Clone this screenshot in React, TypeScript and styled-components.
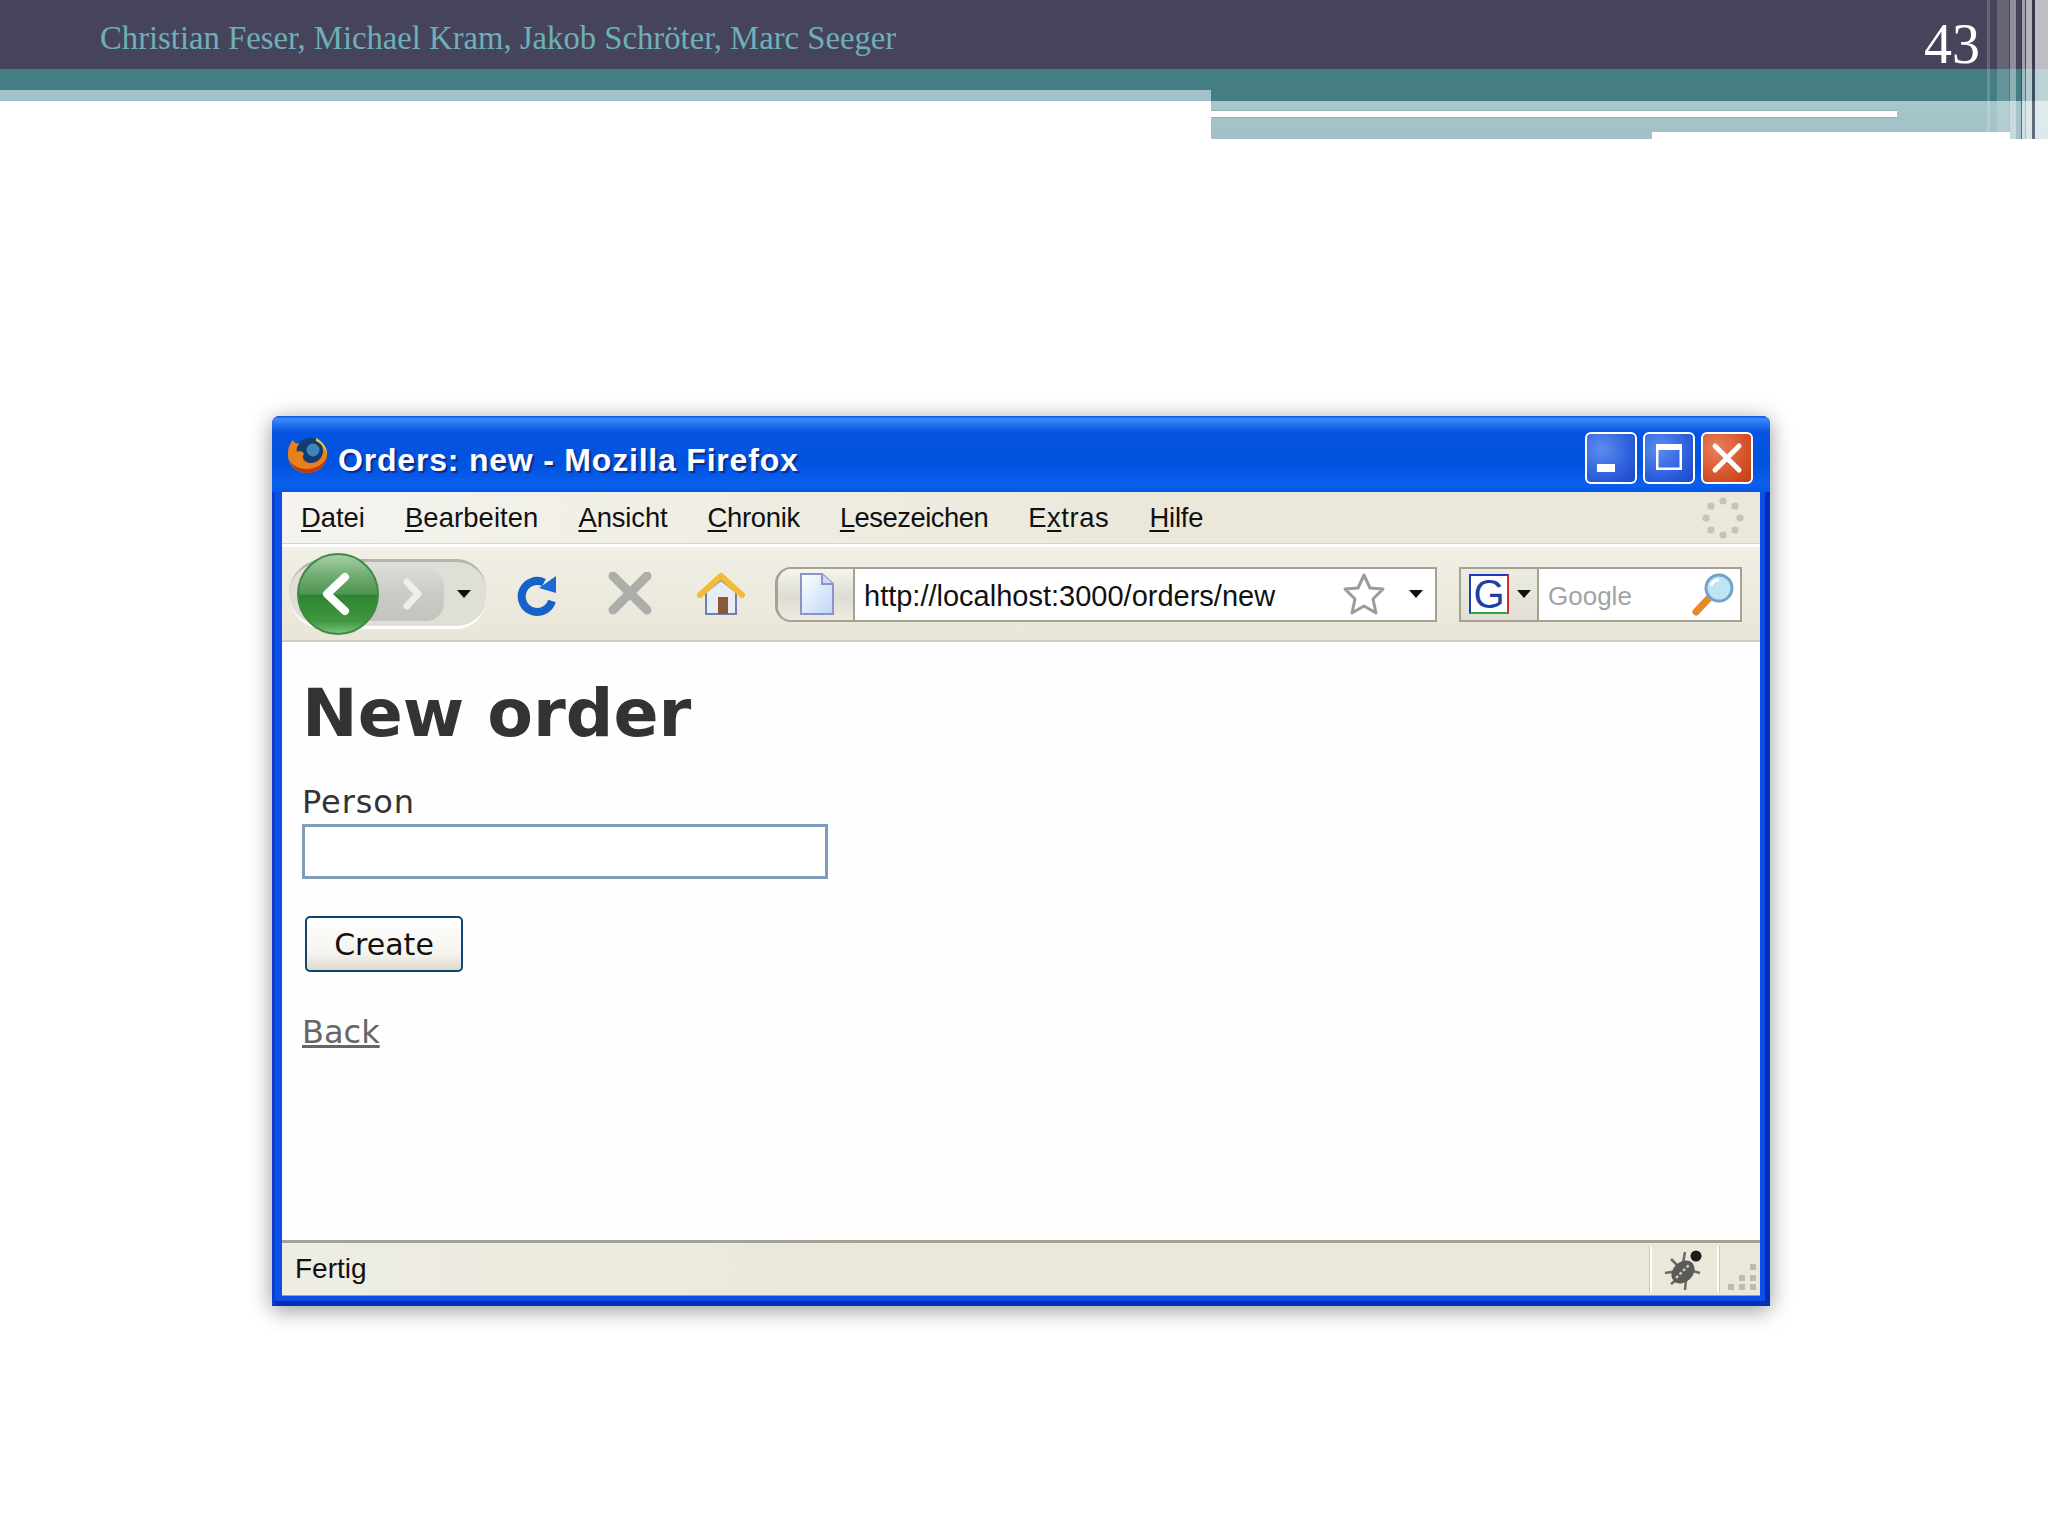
import { createGlobalStyle, styled } from "styled-components";

const GlobalStyle = createGlobalStyle`
    html, body {
        margin: 0;
        padding: 0;
        background: #ffffff;
    }
`

const Page = styled.div`
    position: relative;
    width: 2048px;
    height: 1536px;
    overflow: hidden;
    background: #ffffff;
`

const Header = styled.header`
    position: relative;
    height: 139px;
`

const TopBar = styled.div`
    height: 69px;
    display: flex;
    align-items: flex-start;
    justify-content: space-between;
    background: #45445a;
    padding: 0 68px 0 100px;
`

const Authors = styled.span`
    font-family: "Liberation Serif", serif;
    font-size: 32.7px;
    line-height: 76px;
    color: #6eafba;
`

const SlideNumber = styled.span`
    font-family: "Liberation Serif", serif;
    font-size: 56px;
    line-height: 88px;
    color: #ffffff;
`

const BandRow = styled.div`
    display: flex;
`

const LeftBand = styled.div`
    width: 1211px;
    height: 32px;
    background: linear-gradient(#457d85 21px, #a3c1ca 21px);
`

const RightBand = styled.div`
    flex: 1;
    display: flex;
    flex-direction: column;
`

const TealBar = styled.div`
    height: 32px;
    background: #457d85;
`

const PaleBlock = styled.div`
    height: 38px;
    padding-top: 10px;
    box-sizing: border-box;
    display: flex;
    flex-direction: column;
    background: linear-gradient(#a6c7c8, #a3bfc8);
`

const WhiteStrip = styled.div`
    width: 686px;
    height: 6px;
    background: #ffffff;
    box-shadow: 0 -1px 0 #93b2b4, 0 1px 0 #93b2b4;
`

const WhiteNotch = styled.div`
    width: 358px;
    height: 7px;
    margin: 15px 0 0 441px;
    background: #ffffff;
`

const StripeOverlay = styled.div`
    position: absolute;
    top: 0;
    right: 0;
    bottom: 0;
    width: 61px;
    display: flex;
    pointer-events: none;
`

const Stripe = styled.div<{ $w: number; $a?: number; $dark?: boolean }>`
    flex: 0 0 ${p => p.$w}px;
    background: ${p => p.$dark ? "rgba(50, 50, 70, .6)" : `rgba(255, 255, 255, ${p.$a ?? 0})`};
`

const Slide = styled.main`
    padding: 277px 0 0 272px;
`

const Window = styled.div`
    width: 1498px;
    height: 890px;
    box-sizing: border-box;
    display: flex;
    flex-direction: column;
    border-radius: 8px 8px 0 0;
    background: #0f4ee6;
    box-shadow: 0 4px 22px rgba(0, 0, 0, .42), inset 3px 0 0 #0a3dcc, inset -5px -5px 0 #0030b8;
    padding: 0 10px 10px 10px;
`

const TitleBar = styled.div`
    flex: 0 0 76px;
    margin: 0 -10px;
    padding: 0 17px 0 15px;
    display: flex;
    align-items: center;
    border-radius: 8px 8px 0 0;
    background: linear-gradient(#0a56dc 0, #3a8cf8 3px, #2a78f0 7px, #0653e2 16px, #0153df 50px, #0a60ee 68px, #0557e6 76px);
`

const AppIcon = styled.svg`
    flex: 0 0 auto;
    width: 42px;
    height: 38px;
    margin-top: 1px;
`

const TitleText = styled.span`
    margin: 12px 0 0 9px;
    font-family: "Liberation Sans", sans-serif;
    font-weight: 700;
    font-size: 32px;
    letter-spacing: 0.8px;
    color: #ffffff;
    text-shadow: 2px 2px 1px #0a2a90;
`

const WinButtons = styled.div`
    margin: 8px 0 0 auto;
    display: flex;
    gap: 6px;
`

const WinButton = styled.div<{ $close?: boolean }>`
    width: 52px;
    height: 52px;
    box-sizing: border-box;
    display: flex;
    align-items: center;
    justify-content: center;
    border: 2px solid #ffffff;
    border-radius: 6px;
    background: ${p => p.$close
        ? "radial-gradient(circle at 30% 30%, #e8805c, #d5532c 60%, #c23c10)"
        : "radial-gradient(circle at 30% 30%, #5c8cf0, #2e60dc 60%, #1a45c8)"};
`

const MenuBar = styled.nav`
    flex: 0 0 52px;
    display: flex;
    align-items: center;
    gap: 40px;
    padding: 0 16px 0 19px;
    box-sizing: border-box;
    border-bottom: 1px solid #d8d5c5;
    background: linear-gradient(90deg, #f4f3ee, #ebe8da 60%);
`

const MenuItem = styled.span<{ $ls: number }>`
    font-family: "Liberation Sans", sans-serif;
    font-size: 27.4px;
    letter-spacing: ${p => p.$ls}px;
    color: #111111;
    u {
        text-underline-offset: 3px;
    }
`

const Throbber = styled.svg`
    margin-left: auto;
    width: 42px;
    height: 42px;
`

const Toolbar = styled.div`
    flex: 0 0 98px;
    display: flex;
    align-items: center;
    padding: 1px 0 0 7px;
    box-sizing: border-box;
    border-top: 3px solid #ffffff;
    border-bottom: 2px solid #d0cdbd;
    background: linear-gradient(#f1efe6, #e9e6d8);
`

const NavPill = styled.div`
    flex: 0 0 197px;
    height: 70px;
    box-sizing: border-box;
    display: flex;
    align-items: center;
    border-radius: 35px 30px 30px 35px;
    border-top: 3px solid #b4b4ae;
    border-bottom: 3px solid #ffffff;
    background: #dfdfd8;
`

const BackButton = styled.div`
    position: relative;
    z-index: 1;
    flex: 0 0 82px;
    height: 82px;
    margin-left: 8px;
    box-sizing: border-box;
    display: flex;
    align-items: center;
    justify-content: center;
    border-radius: 50%;
    border: 2px solid #3f8a45;
    background: linear-gradient(#a8cfa6 0, #6aa86c 30%, #4f9552 50%, #2f8330 52%, #3f983f 85%, #7cc07a 100%);
`

const ForwardButton = styled.div`
    flex: 0 0 90px;
    height: 54px;
    margin-left: -25px;
    padding-left: 25px;
    box-sizing: border-box;
    display: flex;
    align-items: center;
    justify-content: center;
    border-radius: 0 18px 18px 0;
    background: linear-gradient(#dcdcd8, #cbcbc6 50%, #c4c4bf);
`

const DropArrow = styled.span<{ $mx?: number }>`
    flex: 0 0 auto;
    width: 0;
    height: 0;
    margin: 0 ${p => p.$mx ?? 0}px;
    border-left: 7px solid transparent;
    border-right: 7px solid transparent;
    border-top: 8px solid #111111;
`

const ToolIcon = styled.svg<{ $ml: number; $w: number }>`
    flex: 0 0 auto;
    width: ${p => p.$w}px;
    height: 44px;
    margin-left: ${p => p.$ml}px;
`

const UrlBar = styled.div`
    flex: 0 0 662px;
    height: 55px;
    margin-left: 29px;
    box-sizing: border-box;
    display: flex;
    align-items: stretch;
    border: 2px solid #a5a294;
    border-left: 3px solid #a5a294;
    border-radius: 16px 0 0 16px;
`

const Identity = styled.div`
    flex: 0 0 77px;
    box-sizing: border-box;
    display: flex;
    align-items: center;
    padding-left: 21px;
    border-right: 2px solid #a5a294;
    border-radius: 14px 0 0 14px;
    background: linear-gradient(#f6f5ef, #dddcd2 55%, #eeece2);
`

const UrlField = styled.div`
    flex: 1;
    display: flex;
    align-items: center;
    padding: 0 12px 0 9px;
    background: #ffffff;
`

const UrlText = styled.span`
    margin-top: 5px;
    font-family: "Liberation Sans", sans-serif;
    font-size: 29px;
    color: #111111;
`

const Star = styled.svg`
    width: 44px;
    height: 44px;
    margin-left: auto;
    margin-right: 23px;
`

const SearchBar = styled.div`
    flex: 0 0 283px;
    height: 55px;
    margin-left: 22px;
    box-sizing: border-box;
    display: flex;
    align-items: stretch;
    border: 2px solid #a5a294;
`

const Engine = styled.div`
    flex: 0 0 78px;
    box-sizing: border-box;
    display: flex;
    align-items: center;
    gap: 8px;
    padding-left: 8px;
    border-right: 2px solid #a5a294;
    background: linear-gradient(#ecebe2, #e2e0d6);
`

const EngineLogo = styled.span`
    flex: 0 0 auto;
    width: 40px;
    height: 40px;
    box-sizing: border-box;
    display: flex;
    align-items: center;
    justify-content: center;
    border-style: solid;
    border-width: 2px;
    border-color: #1c3cb8 #d0302c #2eaa3c #1c3cb8;
    background: #ffffff;
    font-family: "Liberation Sans", sans-serif;
    font-size: 40px;
    line-height: 36px;
    color: #1c3fa8;
`

const SearchField = styled.div`
    flex: 1;
    display: flex;
    align-items: center;
    justify-content: space-between;
    padding: 0 4px 0 9px;
    background: #ffffff;
`

const Placeholder = styled.span`
    margin-top: 5px;
    font-family: "Liberation Sans", sans-serif;
    font-size: 26px;
    color: #a3a3a3;
`

const Content = styled.section`
    flex: 1;
    min-height: 0;
    padding: 33px 0 0 20px;
    background: #fefefe;
    font-family: "DejaVu Sans", sans-serif;
    color: #333333;
`

const Heading = styled.h1`
    margin: 0;
    font-size: 66.5px;
    font-weight: 700;
    line-height: 76px;
`

const FieldLabel = styled.label`
    display: block;
    margin-top: 32px;
    font-size: 32px;
    letter-spacing: 0.9px;
    line-height: 38px;
`

const TextBox = styled.div`
    width: 526px;
    height: 55px;
    margin-top: 3px;
    box-sizing: border-box;
    border: 3px solid #7f9db9;
    background: #ffffff;
`

const SubmitButton = styled.button`
    display: block;
    width: 158px;
    height: 56px;
    margin: 37px 0 0 3px;
    padding: 0;
    box-sizing: border-box;
    border: 2px solid #0e4478;
    border-radius: 5px;
    background: linear-gradient(#ffffff, #f4f3ee 70%, #dedbcc);
    font-family: "DejaVu Sans", sans-serif;
    font-size: 30px;
    color: #111111;
`

const BackLink = styled.a`
    display: inline-block;
    margin-top: 41px;
    font-size: 32px;
    line-height: 38px;
    color: #666666;
    text-decoration: underline;
`

const StatusBar = styled.footer`
    flex: 0 0 56px;
    box-sizing: border-box;
    display: flex;
    align-items: center;
    border-top: 3px solid #a3a294;
    border-bottom: 1px solid #6ea4f4;
    background: linear-gradient(90deg, #eeede4, #ebe8da 40%);
    padding-left: 13px;
`

const StatusText = styled.span`
    font-family: "Liberation Sans", sans-serif;
    font-size: 28px;
    color: #111111;
`

const StatusCell = styled.div`
    margin-left: auto;
    flex: 0 0 65px;
    height: 46px;
    display: flex;
    align-items: center;
    justify-content: center;
    border-left: 2px solid #ffffff;
    border-right: 2px solid #ffffff;
    box-shadow: -1px 0 0 #c8c6b6, 1px 0 0 #c8c6b6;
`

const Grip = styled.svg`
    flex: 0 0 41px;
    width: 41px;
    height: 46px;
`

const menuItems: [string, string, string, number][] = [
    ["", "D", "atei", 0],
    ["", "B", "earbeiten", 0.1],
    ["", "A", "nsicht", -0.1],
    ["", "C", "hronik", -0.3],
    ["", "L", "esezeichen", -0.5],
    ["E", "x", "tras", 0.6],
    ["", "H", "ilfe", -0.2],
]

const stripes = [
    {w: 3, a: .18},
    {w: 6.5},
    {w: 12, a: .18},
    {w: 1.5},
    {w: 6, a: .4},
    {w: 5},
    {w: 1, dark: true},
    {w: 3, a: .5},
    {w: 1},
    {w: 6, a: .6},
    {w: 3, dark: true},
    {w: 13, a: .65},
]

const throbberDots = [0, 45, 90, 135, 180, 225, 270, 315]

export default function App() {
    return (
        <Page>
            <GlobalStyle/>
            <Header>
                <TopBar>
                    <Authors>Christian Feser, Michael Kram, Jakob Schröter, Marc Seeger</Authors>
                    <SlideNumber>43</SlideNumber>
                </TopBar>
                <BandRow>
                    <LeftBand/>
                    <RightBand>
                        <TealBar/>
                        <PaleBlock>
                            <WhiteStrip/>
                            <WhiteNotch/>
                        </PaleBlock>
                    </RightBand>
                </BandRow>
                <StripeOverlay>
                    {stripes.map((s, i) => <Stripe key={i} $w={s.w} $a={s.a} $dark={s.dark}/>)}
                </StripeOverlay>
            </Header>
            <Slide>
                <Window>
                    <TitleBar>
                        <AppIcon viewBox="0 0 42 38">
                            <circle cx="23" cy="18" r="16" fill="#123c72"/>
                            <circle cx="26" cy="14" r="6.500" fill="#3f86b8"/>
                            <path d="M6 4C8 8 10 8 13 7C10 10 9 13 10 16C12 14 16 15 17 18C14 21 17 27 24 27C31 27 36 21 36 15C36 11 34 7 31 4C37 8 41 13 40 20C39 31 30 37 20 37C9 37 1 29 1 19C1 13 2 8 6 4Z" fill="#e8801c"/>
                            <path d="M2 24C5 32 12 37 20 37C30 37 38 31 40 21C36 29 28 33 20 33C12 33 6 30 2 24Z" fill="#b83c10"/>
                            <path d="M29 2C35 5 40 11 40 18C38 12 34 7 29 5Z" fill="#f6c83c"/>
                        </AppIcon>
                        <TitleText>Orders: new - Mozilla Firefox</TitleText>
                        <WinButtons>
                            <WinButton>
                                <svg width="36" height="36" viewBox="0 0 36 36"><rect x="4" y="24" width="18" height="8" fill="#fff"/></svg>
                            </WinButton>
                            <WinButton>
                                <svg width="36" height="36" viewBox="0 0 36 36"><path d="M5 4h26v26h-26z M7.500 10v17.500h21v-17.500z" fill="#fff" fillRule="evenodd"/></svg>
                            </WinButton>
                            <WinButton $close>
                                <svg width="36" height="36" viewBox="0 0 36 36"><path d="M6 6L30 30M30 6L6 30" stroke="#fff" strokeWidth="5" strokeLinecap="round"/></svg>
                            </WinButton>
                        </WinButtons>
                    </TitleBar>
                    <MenuBar>
                        {menuItems.map(([pre, key, rest, ls]) => (
                            <MenuItem key={key} $ls={ls}>{pre}<u>{key}</u>{rest}</MenuItem>
                        ))}
                        <Throbber viewBox="0 0 42 42">
                            {throbberDots.map(deg => (
                                <circle
                                    key={deg}
                                    cx={21 + 17 * Math.cos(deg * Math.PI / 180)}
                                    cy={21 + 17 * Math.sin(deg * Math.PI / 180)}
                                    r="3.600"
                                    fill="#c4c3b6"
                                />
                            ))}
                        </Throbber>
                    </MenuBar>
                    <Toolbar>
                        <NavPill>
                            <BackButton>
                                <svg width="40" height="48" viewBox="0 0 40 48">
                                    <path d="M27 7L9 24L27 41" fill="none" stroke="#fff" strokeWidth="8" strokeLinecap="round" strokeLinejoin="round"/>
                                </svg>
                            </BackButton>
                            <ForwardButton>
                                <svg width="26" height="34" viewBox="0 0 26 34">
                                    <path d="M8 5L19 17L8 29" fill="none" stroke="#eeeeea" strokeWidth="7" strokeLinecap="round" strokeLinejoin="round"/>
                                </svg>
                            </ForwardButton>
                            <DropArrow $mx={13}/>
                        </NavPill>
                        <ToolIcon $ml={28} $w={46} viewBox="0 0 46 44">
                            <path d="M38 29 A15.500 15.500 0 1 1 30 10.500" fill="none" stroke="#1762c9" strokeWidth="8"/>
                            <path d="M25 16 L42 4 L42 21 Z" fill="#1d6ad6"/>
                        </ToolIcon>
                        <ToolIcon $ml={47} $w={46} viewBox="0 0 46 44">
                            <path d="M6 4L40 38M40 4L6 38" stroke="#adadaa" strokeWidth="9" strokeLinecap="round"/>
                        </ToolIcon>
                        <ToolIcon $ml={43} $w={50} viewBox="0 0 50 44">
                            <path d="M10 20V42H40V20L25 8Z" fill="#e8edf5" stroke="#6f7fb0" strokeWidth="2"/>
                            <rect x="22" y="25" width="10" height="17" fill="#8a5a34"/>
                            <path d="M4 23L25 4L46 23" fill="none" stroke="#f2bc34" strokeWidth="6" strokeLinecap="round" strokeLinejoin="round"/>
                        </ToolIcon>
                        <UrlBar>
                            <Identity>
                                <svg width="36" height="44" viewBox="0 0 36 44">
                                    <defs>
                                        <linearGradient id="docFill" x1="0" y1="0" x2="1" y2="1">
                                            <stop offset="0" stopColor="#ffffff"/>
                                            <stop offset="1" stopColor="#bcd6f6"/>
                                        </linearGradient>
                                    </defs>
                                    <path d="M2 2H23L34 12V42H2Z" fill="url(#docFill)" stroke="#8c93c8" strokeWidth="2"/>
                                    <path d="M23 2V12H34" fill="#cfdcf0" stroke="#8c93c8" strokeWidth="2"/>
                                </svg>
                            </Identity>
                            <UrlField>
                                <UrlText>http://localhost:3000/orders/new</UrlText>
                                <Star viewBox="0 0 44 44">
                                    <path d="M22 3L28 16L41 17L31 27L34 41L22 34L10 41L13 27L3 17L16 16Z" fill="#ffffff" stroke="#9b9b98" strokeWidth="3" strokeLinejoin="round"/>
                                </Star>
                                <DropArrow/>
                            </UrlField>
                        </UrlBar>
                        <SearchBar>
                            <Engine>
                                <EngineLogo>G</EngineLogo>
                                <DropArrow/>
                            </Engine>
                            <SearchField>
                                <Placeholder>Google</Placeholder>
                                <svg width="46" height="46" viewBox="0 0 46 46">
                                    <path d="M6 41L19 27" stroke="#e48a2c" strokeWidth="7" strokeLinecap="round"/>
                                    <circle cx="29" cy="17" r="13" fill="#bfe4f6" stroke="#6fa2c6" strokeWidth="3"/>
                                    <path d="M21 15C22 11 25 9 29 9" fill="none" stroke="#ffffff" strokeWidth="3"/>
                                </svg>
                            </SearchField>
                        </SearchBar>
                    </Toolbar>
                    <Content>
                        <Heading>New order</Heading>
                        <FieldLabel>Person</FieldLabel>
                        <TextBox/>
                        <SubmitButton>Create</SubmitButton>
                        <BackLink>Back</BackLink>
                    </Content>
                    <StatusBar>
                        <StatusText>Fertig</StatusText>
                        <StatusCell>
                            <svg width="44" height="44" viewBox="0 0 44 44">
                                <path d="M2 26L14 24M8 37L17 30M22 43L23 33M37 26L26 23M22 5L20 16M8 12L16 20" stroke="#6a6a66" strokeWidth="2.500"/>
                                <ellipse cx="20" cy="25" rx="13" ry="10" transform="rotate(-45 20 25)" fill="#5a5a56"/>
                                <path d="M13 31L26 18" stroke="#c8c8c0" strokeWidth="2.500" strokeDasharray="3 2"/>
                                <circle cx="33" cy="9" r="5.500" fill="#1a1a1a"/>
                            </svg>
                        </StatusCell>
                        <Grip viewBox="0 0 41 46">
                            <path d="M31 18h6v6h-6z M20 29h6v6h-6z M31 29h6v6h-6z M9 38h6v6h-6z M20 38h6v6h-6z M31 38h6v6h-6z" fill="#bdbbae"/>
                        </Grip>
                    </StatusBar>
                </Window>
            </Slide>
        </Page>
    )
}
